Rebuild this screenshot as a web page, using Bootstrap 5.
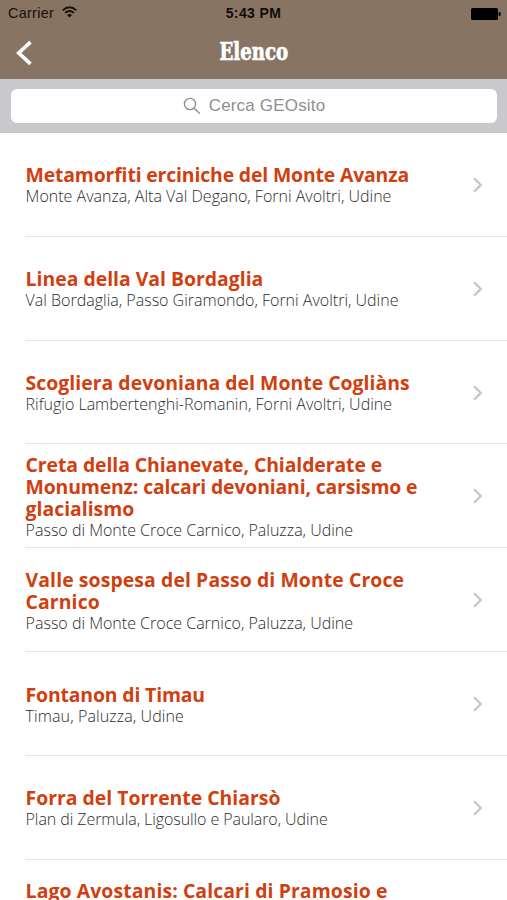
<!DOCTYPE html>
<html lang="it">
<head>
<meta charset="utf-8">
<meta name="viewport" content="width=device-width, initial-scale=1">
<title>Elenco</title>
<link href="https://cdn.jsdelivr.net/npm/bootstrap@5.3.0/dist/css/bootstrap.min.css" rel="stylesheet">
<style>
body{height:900px;overflow:hidden;background:#fff;font-family:"Open Sans","Noto Sans",sans-serif}
.topbar{background:#877462;height:79px}
.status{height:27px;font:14.5px/27px "Liberation Sans",sans-serif;letter-spacing:.25px;color:#17110c;display:grid;grid-template-columns:1fr auto 1fr}
.clock{font-weight:700;color:#100c09;font-size:14px;letter-spacing:.4px}
.status-end{padding-right:6.5px}
.nav-head{height:52px;display:grid;grid-template-columns:1fr auto 1fr}
.heading{font:bold 24px/50px "DejaVu Serif Condensed","DejaVu Serif",serif;color:#fff;width:69px;display:flex;justify-content:center}
.heading span{transform:scaleX(.84);-webkit-text-stroke:.7px #fff}
.search-area{height:54px;background:#c9c8cd;padding:10px 10px 10px 11px}
.search-box{height:34px;border-radius:6px;color:#8e8e93;font:17px/34px "Liberation Sans",sans-serif;letter-spacing:.18px;background:#fff}
.site{height:103.83px;margin-left:25px;border-bottom:1px solid #e6e6e6;padding:1px 23px 0 .6px}
.site-text{padding-top:2px}
.site-last{height:40px;border:0;padding-top:18px}
.site-name{font-size:19.4px;line-height:22px;font-weight:700;color:#d13f10;margin:0;white-space:nowrap}
.place{font-size:16px;line-height:21px;font-weight:300;color:#2c2c2c;margin:0;white-space:nowrap}
.ls-a{letter-spacing:-.15px}
.ls-b{letter-spacing:-.08px}
.ls-c{letter-spacing:.03px}
.ls-d{letter-spacing:.1px}
</style>
<script src="https://cdn.jsdelivr.net/npm/bootstrap@5.3.0/dist/js/bootstrap.bundle.min.js"></script>
</head>
<body>
<svg class="d-none"><symbol id="chev" viewBox="0 0 12 18"><path d="M2 2.3 8.8 9 2 15.7" fill="none" stroke="#c4c4c7" stroke-width="2.2"/></symbol></svg>
<header class="topbar">
  <div class="status">
    <div class="d-flex align-items-center ps-2"><span>Carrier</span>
      <svg class="ms-2 mb-1" width="15" height="12" viewBox="0 0 15 12" fill="none" stroke="#17110c" stroke-width="1.9"><path d="M.7 4.4Q7.5-1.7 14.3 4.4M3.1 6.9Q7.5 3 11.9 6.9"/><path d="M5 9Q7.5 7 10 9L7.5 11.6Z" fill="#17110c" stroke="none"/></svg>
    </div>
    <div class="clock">5:43 PM</div>
    <div class="status-end d-flex align-items-center justify-content-end"><svg width="30" height="12"><rect x="0" y="0" width="27" height="12" rx="1.5"/><rect x="27.6" y="4" width="2" height="4" rx="1"/></svg></div>
  </div>
  <div class="nav-head">
    <div class="d-flex align-items-center ps-3"><svg width="17" height="27" viewBox="0 0 17 27"><path d="M14.5 2.2 2.8 13 14.5 23.8" fill="none" stroke="#fff" stroke-width="3.7"/></svg></div>
    <div class="heading"><span>Elenco</span></div><div></div>
  </div>
</header>
<div class="search-area"><div class="search-box d-flex align-items-center justify-content-center">
  <svg class="me-2" width="18" height="18" viewBox="0 0 18 18" fill="none" stroke="#8e8e93" stroke-width="1.4"><circle cx="7" cy="7" r="5.6"/><path d="m11 11 5.8 5.8"/></svg><span>Cerca GEOsito</span>
</div></div>
<main>
  <div class="site d-flex align-items-center justify-content-between"><div class="site-text"><h2 class="site-name ls-a">Metamorfiti erciniche del Monte Avanza</h2><p class="place">Monte Avanza, Alta Val Degano, Forni Avoltri, Udine</p></div><svg width="12" height="18"><use href="#chev"/></svg></div>
  <div class="site d-flex align-items-center justify-content-between"><div class="site-text"><h2 class="site-name">Linea della Val Bordaglia</h2><p class="place">Val Bordaglia, Passo Giramondo, Forni Avoltri, Udine</p></div><svg width="12" height="18"><use href="#chev"/></svg></div>
  <div class="site d-flex align-items-center justify-content-between"><div class="site-text"><h2 class="site-name ls-c">Scogliera devoniana del Monte Cogliàns</h2><p class="place">Rifugio Lambertenghi-Romanin, Forni Avoltri, Udine</p></div><svg width="12" height="18"><use href="#chev"/></svg></div>
  <div class="site d-flex align-items-center justify-content-between"><div class="site-text"><h2 class="site-name"><span class="ls-b">Creta della Chianevate, Chialderate e</span><br><span class="ls-a">Monumenz: calcari devoniani, carsismo e</span><br>glacialismo</h2><p class="place">Passo di Monte Croce Carnico, Paluzza, Udine</p></div><svg width="12" height="18"><use href="#chev"/></svg></div>
  <div class="site d-flex align-items-center justify-content-between"><div class="site-text"><h2 class="site-name ls-d">Valle sospesa del Passo di Monte Croce<br>Carnico</h2><p class="place">Passo di Monte Croce Carnico, Paluzza, Udine</p></div><svg width="12" height="18"><use href="#chev"/></svg></div>
  <div class="site d-flex align-items-center justify-content-between"><div class="site-text"><h2 class="site-name ls-a">Fontanon di Timau</h2><p class="place ls-d">Timau, Paluzza, Udine</p></div><svg width="12" height="18"><use href="#chev"/></svg></div>
  <div class="site d-flex align-items-center justify-content-between"><div class="site-text"><h2 class="site-name">Forra del Torrente Chiarsò</h2><p class="place ls-b">Plan di Zermula, Ligosullo e Paularo, Udine</p></div><svg width="12" height="18"><use href="#chev"/></svg></div>
  <div class="site site-last"><div class="site-text"><h2 class="site-name ls-d">Lago Avostanis: Calcari di Pramosio e</h2></div></div>
</main>
</body>
</html>
